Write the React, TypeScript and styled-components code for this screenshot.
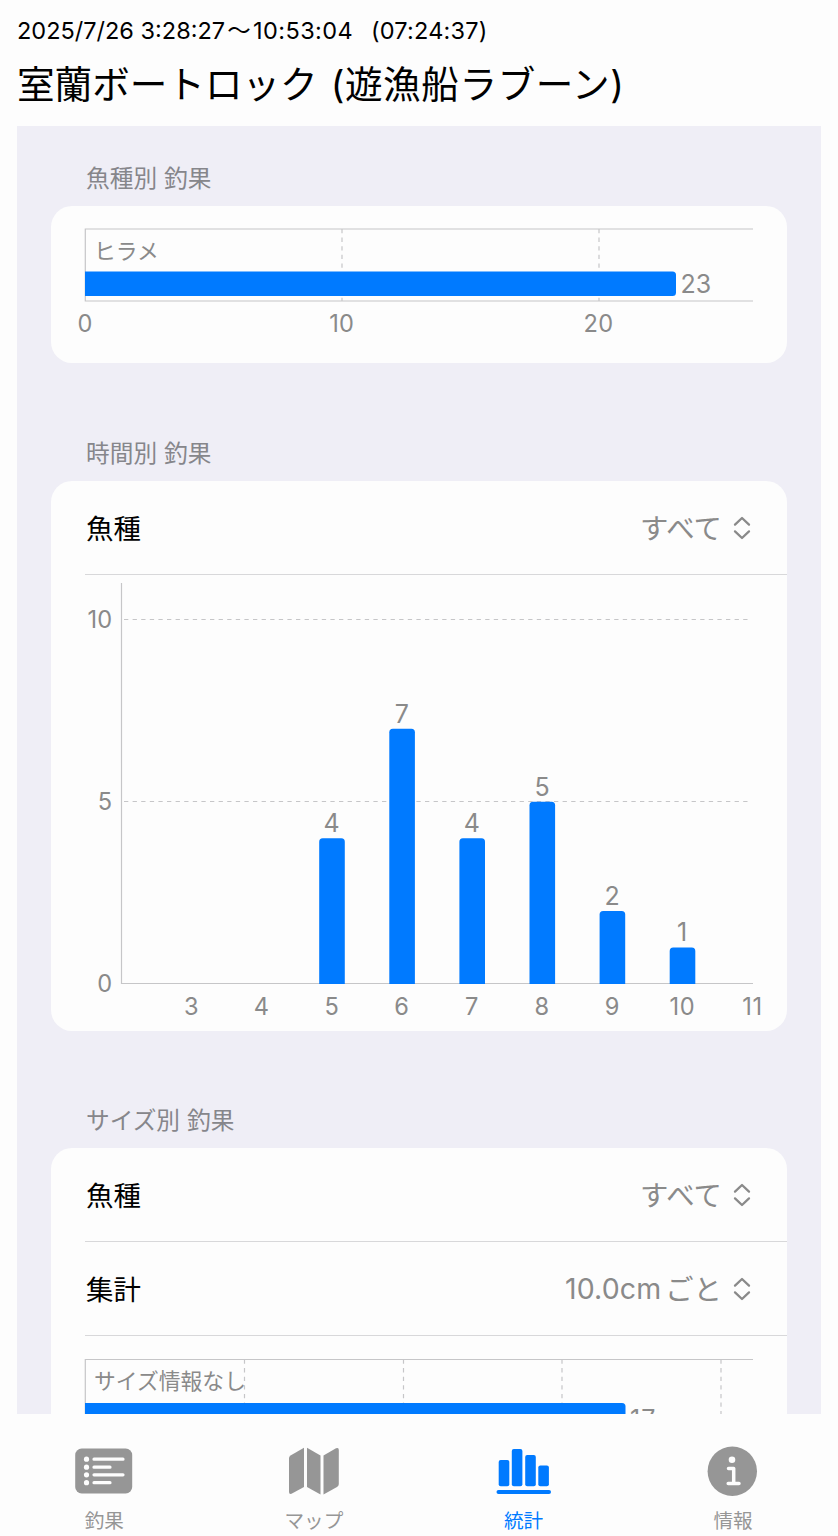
import React from "react";
import styled, { createGlobalStyle } from "styled-components";

const BLUE = "#007aff";
const GRAY = "#8a8a8a";
const FONT = `Inter, "Noto Sans CJK JP", sans-serif`;

const GlobalStyle = createGlobalStyle`
  *, *::before, *::after { box-sizing: border-box; }
  body { margin: 0; background: #fdfdfd; font-family: ${FONT}; font-weight: 400; color: #000; }
`;

const Page = styled.div`
  display: flex;
  flex-direction: column;
  width: 838px;
  height: 1536px;
  overflow: hidden;
  background: #fdfdfd;
`;

const Header = styled.header`
  flex: none;
  height: 126px;
  padding: 15px 17px 0;
  white-space: pre;
`;

const Period = styled.div`
  display: flex;
  height: 32px;
  font-size: 23.5px;
  line-height: 32px;
`;

const Clock = styled.span`
  letter-spacing: 0.4px;
`;

const Wave = styled.span`
  width: 28px;
  text-align: center;
`;

const Duration = styled.span`
  margin-left: 18px;
  letter-spacing: 0.2px;
`;

const Title = styled.h1`
  display: flex;
  gap: 13px;
  margin: 11px 0 0;
  font-size: 37.6px;
  line-height: 54px;
  font-weight: 400;
`;

const Boat = styled.span`
  letter-spacing: 0.6px;
`;

const Scroll = styled.main`
  flex: none;
  height: 1288px;
  margin: 0 17px;
  padding: 38px 34px 0;
  overflow: hidden;
  background: #efeef6;
`;

const Section = styled.section<{ $gap?: number }>`
  margin-bottom: ${(p) => p.$gap ?? 0}px;
`;

const SectionTitle = styled.h2`
  display: flex;
  gap: 7px;
  height: 30px;
  margin: 0 0 12px;
  padding-left: 35px;
  font-size: 23.7px;
  line-height: 30px;
  font-weight: 400;
  color: #86868b;
`;

const Card = styled.div<{ $height: number }>`
  height: ${(p) => p.$height}px;
  border-radius: 21px;
  overflow: hidden;
  background: #fdfdfd;
`;

const Row = styled.div<{ $height: number }>`
  display: flex;
  align-items: center;
  justify-content: space-between;
  height: ${(p) => p.$height}px;
  margin-left: 34px;
  padding-right: 36px;
  border-bottom: 1px solid #d8d8da;
  font-size: 27.4px;
`;

const RowLabel = styled.span`
  padding: 0 0 2px 1px;
`;

const RowValue = styled.span`
  display: flex;
  align-items: center;
  color: ${GRAY};
`;

const Kana = styled.span`
  padding-bottom: 2px;
  font-size: 28.4px;
`;

const Amount = styled.span`
  margin-right: 4px;
  font-size: 28.5px;
  letter-spacing: 0.1px;
`;

const Stepper = styled.svg`
  margin-left: 11px;
`;

const Chart = styled.svg`
  display: block;
  font-family: ${FONT};
  fill: ${GRAY};
`;

const TabBar = styled.nav`
  display: grid;
  grid-template-columns: repeat(4, 209.6px);
  height: 122px;
  margin-left: -0.5px;
`;

const Tab = styled.div<{ $active?: boolean }>`
  display: flex;
  flex-direction: column;
  align-items: center;
  padding-top: 27px;
  color: ${(p) => (p.$active ? BLUE : "#969696")};
  font-size: 19.6px;
  line-height: 28px;
`;

const TabIcon = styled.svg`
  display: block;
  flex: none;
  margin-bottom: 6px;
`;

const UpDown = () => (
  <Stepper width="18" height="24" viewBox="0 0 18 24" fill="none" stroke={GRAY} strokeWidth="2.3" strokeLinecap="round" strokeLinejoin="round">
    <path d="M2 8.6 9 2l7 6.6M2 15.4 9 22l7-6.6" />
  </Stepper>
);

const axis = { stroke: "#c6c6c8", strokeWidth: 1.2 };
const dash = { stroke: "#c6c6c8", strokeWidth: 1.2, strokeDasharray: "4.3 4.3" };

const SpeciesChart = () => (
  <Chart width="736" height="157" viewBox="51 206 736 157" fontSize="23.6">
    <path d="M342 229v72M599 229v72" {...dash} />
    <path d="M753 229H85.3v72H753" fill="none" {...axis} />
    <text x="94" y="258.5" fontSize="21.8">ヒラメ</text>
    <path d="M85 271.5H672.5q3.5 0 3.5 3.5V292.5q0 3.5-3.5 3.5H85z" fill={BLUE} />
    <text x="680.5" y="292.5" fontSize="25">23</text>
    {[0, 10, 20].map((v) => (
      <text key={v} x={85 + v * 25.67} y="332.3" textAnchor="middle" letterSpacing="0.2">{v}</text>
    ))}
  </Chart>
);

const hourly = [
  { hour: 5, count: 4 },
  { hour: 6, count: 7 },
  { hour: 7, count: 4 },
  { hour: 8, count: 5 },
  { hour: 9, count: 2 },
  { hour: 10, count: 1 },
];
const hourX = (h: number) => 191.3 + (h - 3) * 70.1;
const countY = (c: number) => 984 - c * 36.45;

const HourChart = () => (
  <Chart width="736" height="456" viewBox="51 575 736 456" fontSize="23.6">
    <path d="M124 619.5H750M124 801.5H750" {...dash} />
    <path d="M121.5 583V983.5H753" fill="none" {...axis} />
    {[0, 5, 10].map((v) => (
      <text key={v} x="112.5" y={countY(v) + 8.2} textAnchor="end" letterSpacing="0.3">{v}</text>
    ))}
    {[3, 4, 5, 6, 7, 8, 9, 10, 11].map((h) => (
      <text key={h} x={hourX(h) + 0.3} y="1014.5" textAnchor="middle" letterSpacing="0.5">{h}</text>
    ))}
    {hourly.map(({ hour, count }) => {
      const x = hourX(hour) - 12.3;
      const y = countY(count);
      return (
        <g key={hour}>
          <path d={`M${x} 984V${y + 3.5}q0-3.5 3.5-3.5h18.6q3.5 0 3.5 3.5V984z`} fill={BLUE} />
          <text x={x + 12.5} y={y - 6.2} fontSize="25" textAnchor="middle">{count}</text>
        </g>
      );
    })}
  </Chart>
);

const SizeChart = () => (
  <Chart width="736" height="140" viewBox="51 1336 736 140" fontSize="25">
    <path d="M244.5 1359.5v116M403.5 1359.5v116M562 1359.5v116M721 1359.5v116" {...dash} />
    <path d="M753 1359.5H85.3v116" fill="none" {...axis} />
    <text x="94" y="1389" fontSize="21.8">サイズ情報なし</text>
    <path d="M85 1403H622q3.5 0 3.5 3.5V1428H85z" fill={BLUE} />
    <text x="630" y="1428" letterSpacing="1">17</text>
  </Chart>
);

export default function App() {
  return (
    <>
      <GlobalStyle />
      <Page>
        <Header>
          <Period>
            <span>2025/7/26 3:28:27</span>
            <Wave>〜</Wave>
            <Clock>10:53:04</Clock>
            <Duration>(07:24:37)</Duration>
          </Period>
          <Title>
            <span>室蘭ボートロック</span>
            <Boat>(遊漁船ラブーン)</Boat>
          </Title>
        </Header>
        <Scroll>
          <Section $gap={76}>
            <SectionTitle><span>魚種別</span><span>釣果</span></SectionTitle>
            <Card $height={157}>
              <SpeciesChart />
            </Card>
          </Section>
          <Section $gap={75}>
            <SectionTitle><span>時間別</span><span>釣果</span></SectionTitle>
            <Card $height={550}>
              <Row $height={94}>
                <RowLabel>魚種</RowLabel>
                <RowValue><Kana>すべて</Kana><UpDown /></RowValue>
              </Row>
              <HourChart />
            </Card>
          </Section>
          <Section>
            <SectionTitle><span>サイズ別</span><span>釣果</span></SectionTitle>
            <Card $height={328}>
              <Row $height={94}>
                <RowLabel>魚種</RowLabel>
                <RowValue><Kana>すべて</Kana><UpDown /></RowValue>
              </Row>
              <Row $height={94}>
                <RowLabel>集計</RowLabel>
                <RowValue><Amount>10.0cm</Amount><Kana>ごと</Kana><UpDown /></RowValue>
              </Row>
              <SizeChart />
            </Card>
          </Section>
        </Scroll>
        <TabBar>
          <Tab>
            <TabIcon width="60" height="60" viewBox="0 0 60 60" fill="currentColor">
              <rect x="1.2" y="7.5" width="57" height="45" rx="6.5" />
              <g stroke="#fdfdfd" strokeWidth="3.2" strokeLinecap="round">
                <path d="M20 18.2h29M20 26.2h16M20 33.8h29M20 41.7h16" />
              </g>
              <g fill="#fdfdfd">
                <circle cx="12.5" cy="18.2" r="2.6" />
                <circle cx="12.5" cy="26.2" r="2.6" />
                <circle cx="12.5" cy="33.8" r="2.6" />
                <circle cx="12.5" cy="41.7" r="2.6" />
              </g>
            </TabIcon>
            釣果
          </Tab>
          <Tab>
            <TabIcon width="60" height="60" viewBox="0 0 60 60" fill="currentColor">
              <path d="M20 6.7V46L7.5 52.8Q5 53.5 5 51V17Q5 15.5 6.5 14.5z" />
              <path d="M23 6.7 36.5 14.5V53.5L23 46z" />
              <path d="M39.5 14.5 52 7.3Q54.8 6 54.8 9V43Q54.8 44.8 53 46L39.5 53.5z" />
            </TabIcon>
            マップ
          </Tab>
          <Tab $active>
            <TabIcon width="60" height="60" viewBox="0 0 60 60" fill="currentColor">
              <rect x="5.7" y="19" width="10.6" height="26.3" rx="2" />
              <rect x="18.8" y="8" width="10.6" height="37.3" rx="2" />
              <rect x="32.2" y="14" width="10.6" height="31.3" rx="2" />
              <rect x="45.3" y="24.5" width="10.6" height="20.8" rx="2" />
              <rect x="3.5" y="49" width="54.5" height="4" rx="2" />
            </TabIcon>
            統計
          </Tab>
          <Tab>
            <TabIcon width="60" height="60" viewBox="0 0 60 60" fill="currentColor">
              <circle cx="29.3" cy="30.3" r="24.7" />
              <circle cx="29" cy="18.8" r="3.3" fill="#fdfdfd" />
              <path d="M25.5 27.5h5.200V42.5M25.200 42.5h10.8" fill="none" stroke="#fdfdfd" strokeWidth="3.5" strokeLinecap="round" strokeLinejoin="round" />
            </TabIcon>
            情報
          </Tab>
        </TabBar>
      </Page>
    </>
  );
}
